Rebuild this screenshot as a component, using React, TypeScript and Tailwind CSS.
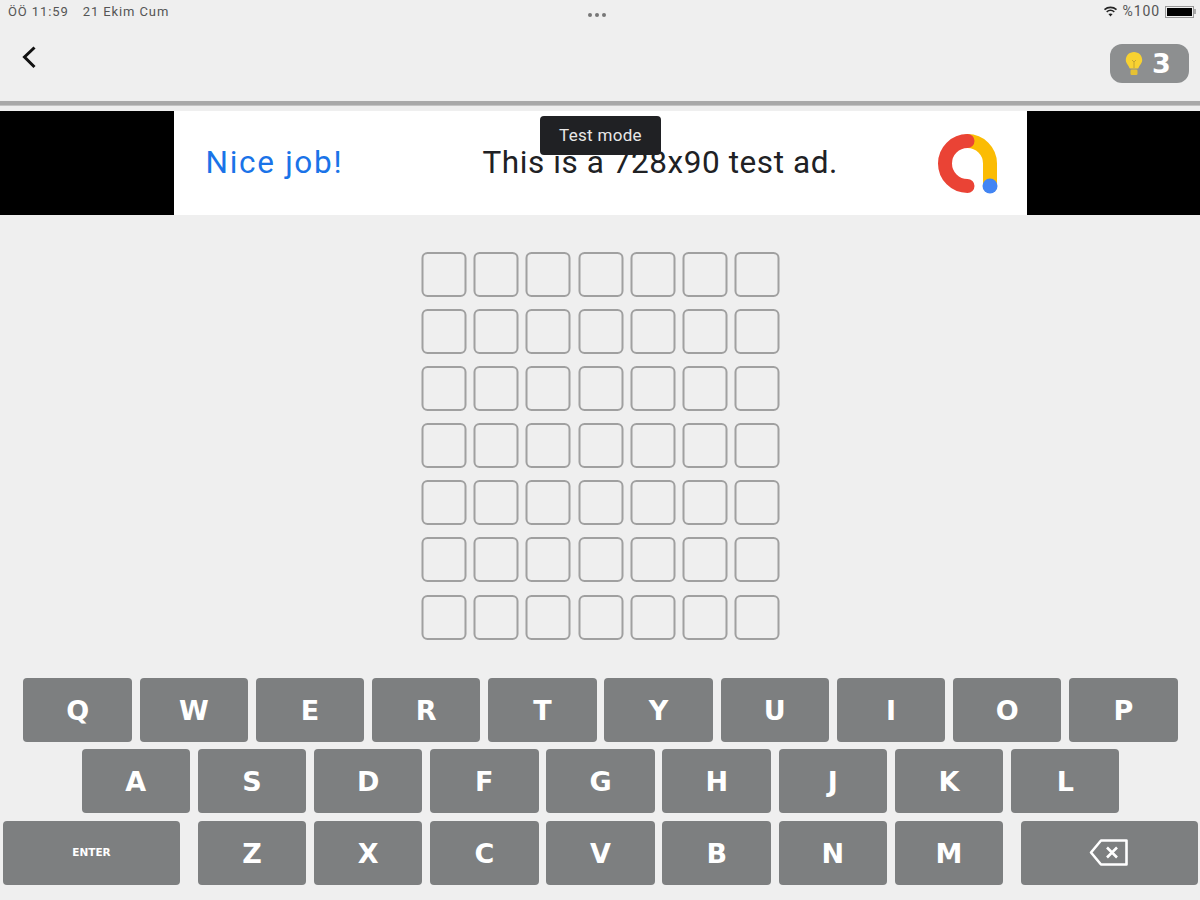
import React from "react";

const rows = ["QWERTYUIOP", "ASDFGHJKL", "ZXCVBNM"];

function Key({ label, wide, children }: { label?: string; wide?: boolean; children?: React.ReactNode }) {
  return (
    <div className={`${wide ? "w-[177px]" : "w-[108.4px]"} h-[64px] rounded-[4px] bg-[#7d7f80] flex items-center justify-center text-white text-[27px] font-bold font-['DejaVu_Sans',sans-serif]`}>
      {label ? <span className="mt-[3px]">{label}</span> : null}
      {children}
    </div>
  );
}

export default function App() {
  return (
    <div className="w-[1200px] h-[900px] overflow-hidden bg-[#efefef] flex flex-col font-['Roboto',sans-serif]">
      <div className="h-[25px] px-[8px] flex items-center justify-between text-[13px] tracking-[0.9px] text-[#555555] relative">
        <div className="flex gap-[14px] -mt-[2px]">
          <span>ÖÖ 11:59</span>
          <span>21 Ekim Cum</span>
        </div>
        <div className="absolute left-[588px] top-[13px] flex gap-[3px]">
          <span className="w-[4px] h-[4px] rounded-full bg-[#777777]" />
          <span className="w-[4px] h-[4px] rounded-full bg-[#777777]" />
          <span className="w-[4px] h-[4px] rounded-full bg-[#777777]" />
        </div>
        <div className="flex items-center gap-[5px] -mt-[2px] -mr-[4px]">
          <svg width="15" height="11" viewBox="0 0 14 11" fill="none" stroke="#222222" strokeWidth="1.6">
            <path d="M1 3.6 C4.5 .6 9.5 .6 13 3.6" />
            <path d="M3.2 5.8 C5.4 4 8.6 4 10.8 5.8" />
            <path d="M7 10.5 L4.9 8 C6 7.2 8 7.2 9.1 8 Z" fill="#222222" stroke="none" />
          </svg>
          <span className="text-[14px]">%100</span>
          <div className="flex items-center">
            <div className="w-[29px] h-[12px] border border-[#999999] p-[1px]">
              <div className="w-full h-full bg-black" />
            </div>
            <div className="w-[2px] h-[5px] bg-[#aaaaaa]" />
          </div>
        </div>
      </div>

      <div className="h-[76px] pl-[21px] pr-[22px] flex justify-between items-start">
        <svg className="mt-[20px]" width="16" height="25" viewBox="0 0 16 25" fill="none" stroke="#111111" strokeWidth="3">
          <path d="M13.5 2.5 L3.5 12 L13.5 22" />
        </svg>
        <div className="mt-[19px] -mr-[11px] w-[79px] h-[39px] rounded-[12px] bg-[#8d8f90] flex items-center pl-[15px] gap-[9px]">
          <svg width="18" height="26" viewBox="0 0 18 26">
            <path d="M9 1 C4.2 1 .8 4.6 .8 9 C.8 12.4 3.6 14.4 4.8 17.5 L13.2 17.5 C14.4 14.4 17.2 12.4 17.2 9 C17.2 4.6 13.8 1 9 1 Z" fill="#f8d231" />
            <rect x="5.5" y="18.5" width="7" height="5.5" rx="1.2" fill="#e6c133" />
            <path d="M7 9 L9 11 L11 9 M9 11 V17" stroke="#b89a30" strokeWidth="0.8" fill="none" />
          </svg>
          <span className="text-white text-[27px] font-bold leading-none font-['DejaVu_Sans',sans-serif]">3</span>
        </div>
      </div>

      <div className="h-[5px] bg-[#a9a9a9] border-b border-[#c4c4c4]" />
      <div className="h-[5px]" />

      <div className="h-[104px] bg-black flex justify-center relative">
        <div className="w-[853px] bg-white flex items-center pl-[32px] text-[31.5px] leading-none">
          <span className="w-[277px] text-[#1a73e8] tracking-[1.7px]">Nice job!</span>
          <span className="text-[#202124] tracking-[0.57px]">This is a 728x90 test ad.</span>
          <svg className="ml-[98px]" width="66" height="66" viewBox="0 0 66 66" fill="none">
            <path d="M31.5 11 A22.5 22.5 0 0 1 54 33.5 V56" stroke="#fbbc04" strokeWidth="14" strokeLinecap="round" />
            <path d="M31.5 11 A22.5 22.5 0 0 0 31.5 56" stroke="#ea4335" strokeWidth="14" strokeLinecap="round" />
            <circle cx="54" cy="56" r="7.5" fill="#4285f4" />
          </svg>
        </div>
        <div className="absolute left-[540px] top-[5px] w-[121px] h-[39px] rounded-[4px] bg-[#202124] flex items-center justify-center text-[#e8e8e8] text-[17px] tracking-[0.3px]">
          Test mode
        </div>
      </div>

      <div className="h-[37px]" />

      <div className="w-[358px] self-center grid grid-cols-7 gap-x-[7.2px] gap-y-[12.1px] translate-x-[0.5px]">
        {Array.from({ length: 49 }, (_, i) => (
          <div key={i} className="w-[45px] h-[45px] rounded-[6px] border-2 border-[#a0a0a0]" />
        ))}
      </div>

      <div className="h-[38px]" />

      <div className="flex flex-col gap-[7.6px] pl-[3px] pr-[2px]">
        <div className="flex justify-center gap-[7.8px]">
          {rows[0].split("").map((c) => <Key key={c} label={c} />)}
        </div>
        <div className="flex justify-center gap-[7.8px]">
          {rows[1].split("").map((c) => <Key key={c} label={c} />)}
        </div>
        <div className="flex justify-between">
          <Key wide>
            <span className="text-[10.5px]">ENTER</span>
          </Key>
          <div className="flex gap-[7.8px]">
            {rows[2].split("").map((c) => <Key key={c} label={c} />)}
          </div>
          <Key wide>
            <svg width="40" height="29" viewBox="0 0 40 29" fill="none" stroke="white" strokeWidth="2.6" strokeLinejoin="round">
              <path d="M12 2.5 H37.5 V26.5 H12 L2 14.5 Z" />
              <path d="M18 9.5 L28 19.5 M28 9.5 L18 19.5" />
            </svg>
          </Key>
        </div>
      </div>
    </div>
  );
}
